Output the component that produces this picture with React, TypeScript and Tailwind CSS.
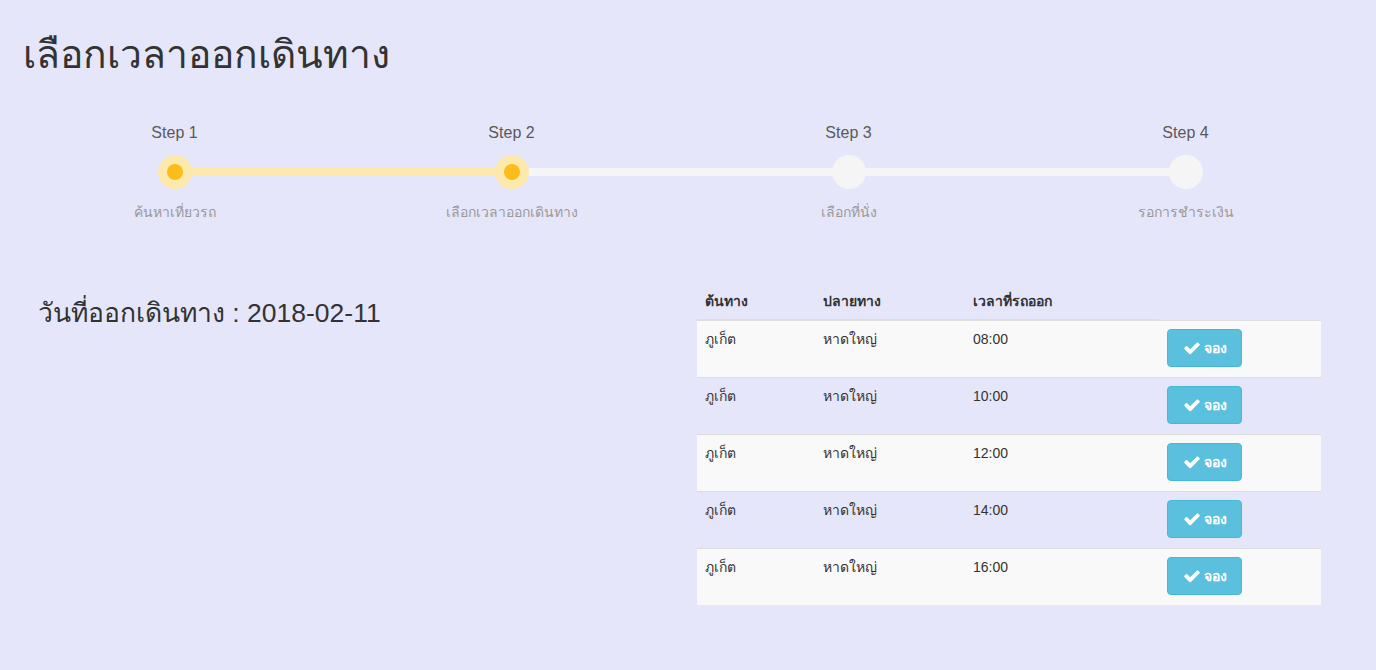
const steps = [
  { label: "Step 1", text: "ค้นหาเที่ยวรถ", done: true },
  { label: "Step 2", text: "เลือกเวลาออกเดินทาง", done: true },
  { label: "Step 3", text: "เลือกที่นั่ง", done: false },
  { label: "Step 4", text: "รอการชำระเงิน", done: false },
];

const trips = ["08:00", "10:00", "12:00", "14:00", "16:00"];

function CheckIcon() {
  return (
    <svg viewBox="0 0 1792 1792" className="h-[18px] w-[18px]" fill="currentColor">
      <path d="M1671 566q0 40-28 68l-724 724-136 136q-28 28-68 28t-68-28l-136-136-362-362q-28-28-28-68t28-68l136-136q28-28 68-28t68 28l294 295 656-657q28-28 68-28t68 28l136 136q28 28 28 68z" />
    </svg>
  );
}

function Stepper() {
  return (
    <div className="relative ml-[6px] grid w-[1348px] grid-cols-4">
      {/* track between first and last dot */}
      <div className="absolute left-[168px] right-[168px] top-[47px] flex h-[8px]">
        <div className="h-full w-1/3 bg-[#fde9ab]" />
        <div className="h-full flex-1 bg-[#f5f5f5]" />
      </div>
      {steps.map((s) => (
        <div key={s.label} className="relative flex flex-col items-center">
          <div className="h-[24px] text-[16px] leading-[24px] text-[#595959]">{s.label}</div>
          <div className="mt-[10px] flex h-[34px] w-[34px] items-center justify-center rounded-full bg-[#f5f5f5]">
            {s.done && (
              <div className="flex h-[34px] w-[34px] items-center justify-center rounded-full bg-[#fde9ab]">
                <div className="h-[16px] w-[16px] rounded-full bg-[#fbbd19]" />
              </div>
            )}
          </div>
          <div className="mt-[13px] text-[14px] leading-[20px] text-[#999]">{s.text}</div>
        </div>
      ))}
    </div>
  );
}

export default function App() {
  return (
    <div className="min-h-screen bg-[#e6e6fa] text-[#333] font-['Liberation_Sans','Noto_Sans',sans-serif]">
      <h1 className="px-[23px] pt-[32px] text-[39px] leading-[46px] font-normal">เลือกเวลาออกเดินทาง</h1>

      <div className="mt-[43px]">
        <Stepper />
      </div>

      <div className="mt-[61px] flex">
        <div className="w-[697px] pl-[38px] pt-[14px]">
          <div className="text-[26.5px] leading-[32px]">วันที่ออกเดินทาง : 2018-02-11</div>
        </div>

        <table className="w-[624px] border-collapse text-[14px] leading-[20px]">
          <thead>
            <tr>
              <th className="w-[118px] border-b-2 border-[#ddd] p-[8px] text-left font-bold">ต้นทาง</th>
              <th className="w-[150px] border-b-2 border-[#ddd] p-[8px] text-left font-bold">ปลายทาง</th>
              <th className="w-[194px] border-b-2 border-[#ddd] p-[8px] text-left font-bold">เวลาที่รถออก</th>
              <th className="w-[162px]" />
            </tr>
          </thead>
          <tbody>
            {trips.map((t, i) => (
              <tr key={t} className={i % 2 === 0 ? "bg-[#f9f9f9]" : ""}>
                <td className="h-[57px] border-t border-[#ddd] p-[8px] align-top">ภูเก็ต</td>
                <td className="border-t border-[#ddd] p-[8px] align-top">หาดใหญ่</td>
                <td className="border-t border-[#ddd] p-[8px] align-top">{t}</td>
                <td className="border-t border-[#ddd] p-[8px] align-top">
                  <button className="flex h-[38px] w-[75px] items-center justify-center gap-[3px] rounded-[4px] border border-[#46b8da] bg-[#5bc0de] text-[14px] font-bold text-white">
                    <CheckIcon />
                    <span>จอง</span>
                  </button>
                </td>
              </tr>
            ))}
          </tbody>
        </table>
      </div>
    </div>
  );
}
